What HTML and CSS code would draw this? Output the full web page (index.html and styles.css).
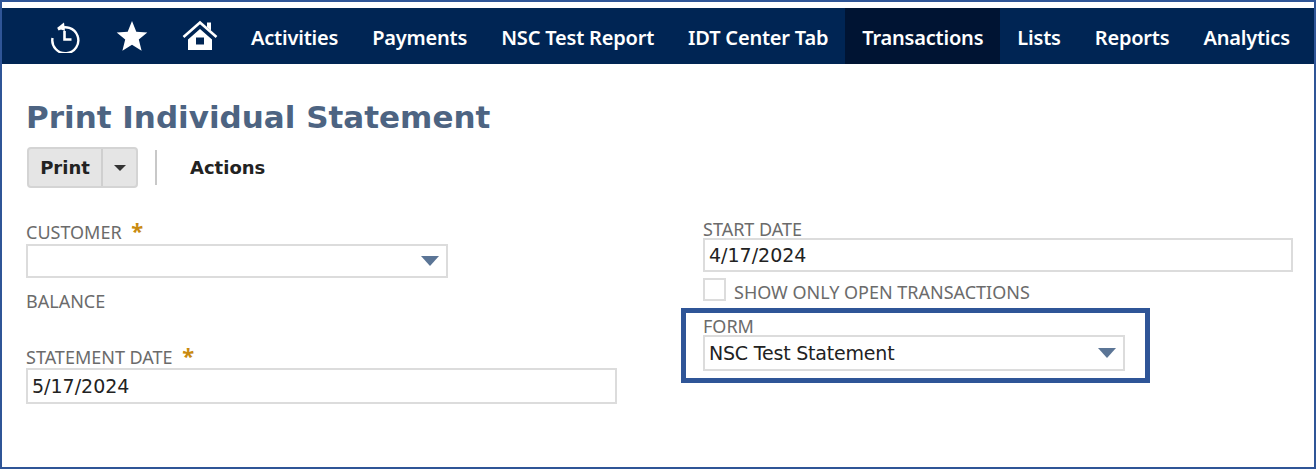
FILE: index.html
```html
<!DOCTYPE html>
<html lang="en">
<head>
  <meta charset="UTF-8">
  <title>Print Individual Statement</title>
  <link rel="stylesheet" href="styles.css">
</head>
<body>
  <div class="frame">

    <!-- Top navigation -->
    <nav class="nav">
      <div class="nav-icons">
        <svg class="icon" width="34" height="34" viewBox="0 0 34 34" fill="none" stroke="#fff" stroke-width="2.4">
          <path d="M10 10.5A13 13 0 1 1 4.500 19"/>
          <path d="M16 3.500l-7 5.500 8 3z" fill="#fff" stroke="none"/>
          <path d="M16.500 12v8.500h7" stroke-width="2.600"/>
        </svg>
        <svg class="icon" width="34" height="34" viewBox="0 0 34 34">
          <path d="M17 2l4.300 10.700 11 .7-8.500 7.100 2.800 11.200L17 25.700l-9.600 6 2.800-11.200-8.500-7.100 11-.7z" fill="#fff"/>
        </svg>
        <svg class="icon" width="36" height="34" viewBox="0 0 36 34">
          <path d="M1.500 18L18 3.500 34.500 18" fill="none" stroke="#fff" stroke-width="2.600"/>
          <path d="M25 3.500h4v8l-4-3.500z" fill="#fff"/>
          <path d="M6 20.500L18 10l12 10.500V31H6zM14 18.500v7h8v-7z" fill="#fff" fill-rule="evenodd"/>
        </svg>
      </div>
      <a class="nav-item">Activities</a>
      <a class="nav-item">Payments</a>
      <a class="nav-item">NSC Test Report</a>
      <a class="nav-item">IDT Center Tab</a>
      <a class="nav-item current">Transactions</a>
      <a class="nav-item">Lists</a>
      <a class="nav-item">Reports</a>
      <a class="nav-item">Analytics</a>
    </nav>

    <main class="page">
      <h1 class="page-title">Print Individual Statement</h1>

      <div class="toolbar">
        <div class="split-btn">
          <span class="split-main">Print</span>
          <span class="split-arrow"><span class="caret caret-dark"></span></span>
        </div>
        <span class="toolbar-sep"></span>
        <span class="actions">Actions</span>
      </div>

      <div class="form-cols">
        <!-- Left column -->
        <div class="col col-left">
          <div class="label label-customer">CUSTOMER <span class="req">*</span></div>
          <div class="field field-select customer-select"><span class="caret"></span></div>
          <div class="label label-balance">BALANCE</div>
          <div class="label label-stmt">STATEMENT DATE <span class="req">*</span></div>
          <div class="field stmt-input">5/17/2024</div>
        </div>

        <!-- Right column -->
        <div class="col col-right">
          <div class="label">START DATE</div>
          <div class="field start-input">4/17/2024</div>
          <div class="check-row">
            <span class="checkbox"></span>
            <span class="label check-label">SHOW ONLY OPEN TRANSACTIONS</span>
          </div>
          <div class="highlight">
            <div class="label">FORM</div>
            <div class="field field-select form-select"><span class="select-text">NSC Test Statement</span><span class="caret"></span></div>
          </div>
        </div>
      </div>
    </main>

  </div>
</body>
</html>
```

FILE: styles.css
```css
html, body {
  margin: 0;
  padding: 0;
  height: 100%;
  background-color: white;
}

.frame {
  box-sizing: border-box;
  height: 469px;
  border: 2px solid #2f5597;
  padding-top: 6px;
  font-family: "Noto Sans", sans-serif;
  overflow: hidden;
}

/* nav */
.nav {
  display: flex;
  align-items: stretch;
  height: 56px;
  background-color: #002554;
}

.nav-icons {
  display: flex;
  align-items: center;
  gap: 33px;
  padding-left: 46px;
  padding-right: 16px;
}

.icon {
  display: block;
}

.nav-item {
  display: flex;
  align-items: center;
  padding: 2px 17px 0;
  color: white;
  font-size: 20px;
  font-weight: 600;
  letter-spacing: -0.2px;
}

.nav-item.current {
  background-color: #001433;
}

/* page */
.page {
  padding: 0 21px 0 24px;
}

.page-title {
  margin: 33px 0 0;
  color: #4d6482;
  font-family: "DejaVu Sans", sans-serif;
  font-size: 31px;
  font-weight: bold;
  line-height: 40px;
}

.toolbar {
  display: flex;
  align-items: center;
  margin: 10px 0 0 1px;
}

.split-btn {
  display: flex;
  box-sizing: border-box;
  width: 111px;
  height: 41px;
  background-color: #e5e5e5;
  border: 2px solid #d4d4d4;
  border-radius: 4px;
}

.split-main {
  display: flex;
  align-items: center;
  justify-content: center;
  width: 72px;
  border-right: 2px solid #cfcfcf;
  color: #222;
  font-family: "DejaVu Sans", sans-serif;
  font-size: 18px;
  font-weight: bold;
}

.split-arrow {
  flex: 1;
  display: flex;
  align-items: center;
  justify-content: center;
}

.toolbar-sep {
  width: 2px;
  height: 35px;
  margin-left: 17px;
  background-color: #c8c8c8;
}

.actions {
  margin-left: 33px;
  color: #222;
  font-family: "DejaVu Sans", sans-serif;
  font-size: 18px;
  font-weight: bold;
}

.form-cols {
  display: flex;
  margin-top: 23px;
}

.col-left {
  width: 677px;
  flex: none;
}

.col-right {
  flex: 1;
  padding-top: 8px;
}

.label {
  color: #6b6b6b;
  font-size: 18px;
  line-height: 20px;
}

.label-customer {
  margin-top: 11px;
}

.label-balance {
  margin-top: 13px;
}

.label-stmt {
  margin-top: 36px;
}

.req {
  color: #c98a10;
  font-size: 22px;
  font-weight: bold;
  line-height: 14px;
  margin-left: 5px;
}

.field {
  box-sizing: border-box;
  position: relative;
  display: flex;
  align-items: center;
  padding-left: 4px;
  background-color: white;
  border: 2px solid #dcdcdc;
  color: #222;
  font-family: "DejaVu Sans", sans-serif;
  font-size: 19px;
}

.field-select {
  justify-content: space-between;
  padding-right: 7px;
}

.customer-select {
  width: 422px;
  height: 34px;
  margin-top: 2px;
  justify-content: flex-end;
}

.stmt-input {
  width: 591px;
  height: 36px;
  margin-top: 1px;
}

.start-input {
  height: 34px;
  margin-top: -1px;
}

.check-row {
  display: flex;
  align-items: flex-end;
  gap: 8px;
  margin-top: 6px;
}

.checkbox {
  box-sizing: border-box;
  width: 23px;
  height: 23px;
  border: 2px solid #dcdcdc;
}

.check-label {
  line-height: 18px;
}

.highlight {
  box-sizing: border-box;
  width: 469px;
  height: 75px;
  margin: 7px 0 0 -22px;
  padding: 5px 0 0 17px;
  border: 5px solid #2f5597;
}

.highlight .label {
  line-height: 16px;
}

.form-select {
  width: 422px;
  height: 36px;
  margin-top: 1px;
}

.select-text {
  letter-spacing: -0.2px;
}

.caret {
  display: block;
  width: 0;
  height: 0;
  border-left: 9px solid transparent;
  border-right: 9px solid transparent;
  border-top: 10px solid #5b7596;
}

.caret-dark {
  border-left-width: 6px;
  border-right-width: 6px;
  border-top: 6px solid #333;
}
```
